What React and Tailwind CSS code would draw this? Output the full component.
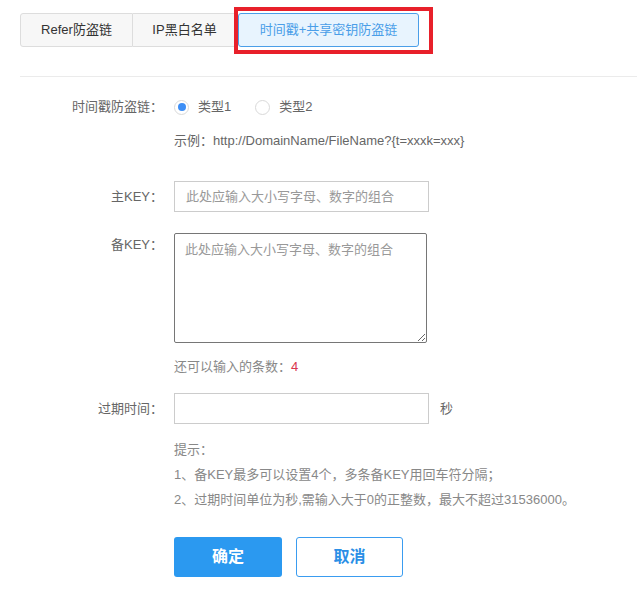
import React from 'react';

const tips = [
  '1、备KEY最多可以设置4个，多条备KEY用回车符分隔；',
  '2、过期时间单位为秒,需输入大于0的正整数，最大不超过31536000。',
];

function Row({ label, labelClass = 'leading-[20px]', className = '', children }) {
  return (
    <div className={`flex ${className}`}>
      <div className={`w-[163px] shrink-0 text-right text-[#666] ${labelClass}`}>{label}</div>
      <div className="ml-[11px] flex-1">{children}</div>
    </div>
  );
}

function Radio({ checked, label }) {
  return (
    <label className="flex items-center cursor-pointer">
      <span className="w-[15px] h-[15px] rounded-full border border-[#d9d9d9] bg-white flex items-center justify-center">
        {checked && <span className="w-[8px] h-[8px] rounded-full bg-[#3d8ef5]" />}
      </span>
      <span className="ml-[9px] text-[#666]">{label}</span>
    </label>
  );
}

export default function App() {
  return (
    <div className="min-h-screen bg-white text-[13px] font-['Liberation_Sans','Noto_Sans_CJK_SC',sans-serif]">
      {/* tabs */}
      <div className="pt-[13px] pl-[20px] flex">
        <div className="h-[34px] w-[113px] flex items-center justify-center border border-[#ddd] bg-[#f7f7f7] text-[#333] rounded-l-[3px]">
          Refer防盗链
        </div>
        <div className="h-[34px] w-[104px] flex items-center justify-center border border-l-0 border-[#ddd] bg-[#f7f7f7] text-[#333]">
          IP黑白名单
        </div>
        <div className="relative ml-[1px]">
          <div className="h-[34px] w-[181px] flex items-center justify-center border border-[#4a9ee8] bg-[#e8f4fe] text-[#4a9ee8] rounded-[3px]">
            时间戳+共享密钥防盗链
          </div>
          <div className="absolute left-[-4px] top-[-6px] w-[199px] h-[47px] border-4 border-[#e8202a]" />
        </div>
      </div>

      <div className="mt-[29px] ml-[20px] h-px bg-[#ebebeb]" />

      {/* form */}
      <Row label="时间戳防盗链：" className="mt-[20px]">
        <div className="flex items-center h-[20px] gap-[24px]">
          <Radio checked label="类型1" />
          <Radio label="类型2" />
        </div>
      </Row>

      <Row label="" className="mt-[14px]">
        <div className="leading-[20px] text-[#666]">示例：http://DomainName/FileName?{'{'}t=xxxk=xxx{'}'}</div>
      </Row>

      <Row label="主KEY：" labelClass="leading-[31px]" className="mt-[30px]">
        <input
          className="w-[255px] h-[31px] border border-[#ccc] px-[11px] text-[#333] placeholder:text-[#999] outline-none"
          placeholder="此处应输入大小写字母、数字的组合"
        />
      </Row>

      <Row label="备KEY：" labelClass="leading-[20px] pt-[2px]" className="mt-[21px]">
        <textarea
          className="block w-[253px] h-[110px] border border-[#767676] rounded-[2px] px-[10px] py-[6px] text-[#333] placeholder:text-[#999] outline-none"
          placeholder="此处应输入大小写字母、数字的组合"
        />
      </Row>

      <Row label="" className="mt-[14px]">
        <div className="leading-[20px] text-[#888]">
          还可以输入的条数：<span className="text-[#d9364f]">4</span>
        </div>
      </Row>

      <Row label="过期时间：" labelClass="leading-[31px]" className="mt-[16px]">
        <div className="flex items-center">
          <input className="w-[255px] h-[31px] border border-[#ccc] px-[11px] text-[#333] outline-none" />
          <span className="ml-[11px] text-[#666]">秒</span>
        </div>
      </Row>

      <Row label="" className="mt-[13px]">
        <div className="leading-[25px] text-[#888]">
          <div>提示：</div>
          {tips.map((t) => (
            <div key={t}>{t}</div>
          ))}
        </div>
      </Row>

      <Row label="" className="mt-[25px]">
        <div className="flex gap-[14px]">
          <button className="w-[108px] h-[40px] rounded-[3px] bg-[#2b99f0] text-white text-[16px] font-bold">
            确定
          </button>
          <button className="w-[107px] h-[40px] rounded-[3px] border border-[#3a9cf0] bg-white text-[#2b8fe6] text-[16px] font-bold">
            取消
          </button>
        </div>
      </Row>
    </div>
  );
}
